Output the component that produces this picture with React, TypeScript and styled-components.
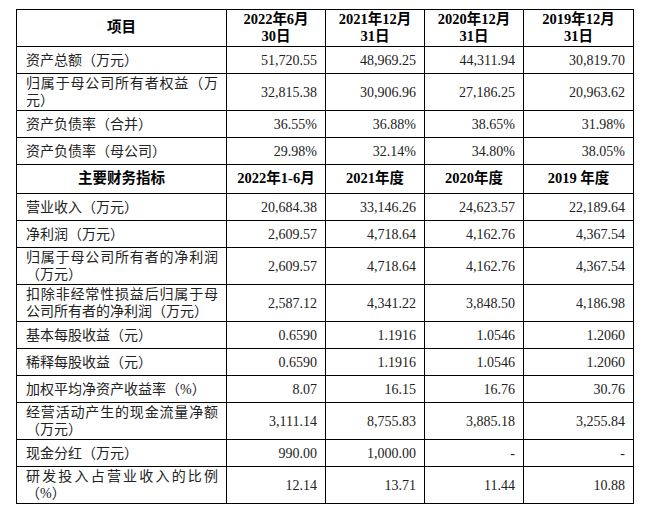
import styled, { createGlobalStyle } from "styled-components";

const GlobalStyle = createGlobalStyle`
  html, body {
    margin: 0;
    padding: 0;
    background: #ffffff;
  }
  body {
    font-family: "Liberation Serif", "Noto Sans CJK SC", serif;
    color: #111111;
  }
`;

type RowData = {
  label: string;
  values: string[];
  tall?: boolean;
};

const balanceRows: RowData[] = [
  { label: "资产总额（万元）", values: ["51,720.55", "48,969.25", "44,311.94", "30,819.70"] },
  { label: "归属于母公司所有者权益（万元）", values: ["32,815.38", "30,906.96", "27,186.25", "20,963.62"], tall: true },
  { label: "资产负债率（合并）", values: ["36.55%", "36.88%", "38.65%", "31.98%"] },
  { label: "资产负债率（母公司）", values: ["29.98%", "32.14%", "34.80%", "38.05%"] }
];

const indicatorRows: RowData[] = [
  { label: "营业收入（万元）", values: ["20,684.38", "33,146.26", "24,623.57", "22,189.64"] },
  { label: "净利润（万元）", values: ["2,609.57", "4,718.64", "4,162.76", "4,367.54"] },
  { label: "归属于母公司所有者的净利润（万元）", values: ["2,609.57", "4,718.64", "4,162.76", "4,367.54"], tall: true },
  { label: "扣除非经常性损益后归属于母公司所有者的净利润（万元）", values: ["2,587.12", "4,341.22", "3,848.50", "4,186.98"], tall: true },
  { label: "基本每股收益（元）", values: ["0.6590", "1.1916", "1.0546", "1.2060"] },
  { label: "稀释每股收益（元）", values: ["0.6590", "1.1916", "1.0546", "1.2060"] },
  { label: "加权平均净资产收益率（%）", values: ["8.07", "16.15", "16.76", "30.76"] },
  { label: "经营活动产生的现金流量净额（万元）", values: ["3,111.14", "8,755.83", "3,885.18", "3,255.84"], tall: true },
  { label: "现金分红（万元）", values: ["990.00", "1,000.00", "-", "-"] },
  { label: "研发投入占营业收入的比例（%）", values: ["12.14", "13.71", "11.44", "10.88"], tall: true }
];

const Page = styled.div`
  padding: 9px 0 0 16px;
`;

const Table = styled.table`
  border-collapse: collapse;
  table-layout: fixed;
  width: 617px;
  font-size: 14px;
  line-height: 17px;
`;

const Row = styled.tr<{ $height: number }>`
  height: ${(p) => p.$height}px;
`;

const HeadCell = styled.th`
  border: 1px solid #000000;
  padding: 0 6px;
  font-weight: bold;
  font-size: 14.5px;
  line-height: 17.5px;
  text-align: center;
  vertical-align: middle;
  color: #000000;
`;

const LabelCell = styled.td`
  border: 1px solid #000000;
  padding: 1px 8px 1px 9px;
  text-align: justify;
  text-align-last: left;
  vertical-align: middle;
  color: #222222;
`;

const NumCell = styled.td`
  border: 1px solid #000000;
  padding: 1px 8px 1px 4px;
  text-align: right;
  vertical-align: middle;
  color: #222222;
`;

const Line = styled.span`
  display: block;
`;

const DataRows = ({ rows }: { rows: RowData[] }) => (
  <>
    {rows.map((row) => (
      <Row key={row.label} $height={row.tall ? 37 : 27}>
        <LabelCell>{row.label}</LabelCell>
        {row.values.map((v, i) => (
          <NumCell key={i}>{v}</NumCell>
        ))}
      </Row>
    ))}
  </>
);

export default function App() {
  return (
    <Page>
      <GlobalStyle />
      <Table>
        <colgroup>
          <col style={{ width: 210 }} />
          <col style={{ width: 99 }} />
          <col style={{ width: 99 }} />
          <col style={{ width: 99 }} />
          <col style={{ width: 110 }} />
        </colgroup>
        <tbody>
          <Row $height={37}>
            <HeadCell>项目</HeadCell>
            <HeadCell>
              <Line>2022年6月</Line>
              <Line>30日</Line>
            </HeadCell>
            <HeadCell>
              <Line>2021年12月</Line>
              <Line>31日</Line>
            </HeadCell>
            <HeadCell>
              <Line>2020年12月</Line>
              <Line>31日</Line>
            </HeadCell>
            <HeadCell>
              <Line>2019年12月</Line>
              <Line>31日</Line>
            </HeadCell>
          </Row>
          <DataRows rows={balanceRows} />
          <Row $height={29}>
            <HeadCell>主要财务指标</HeadCell>
            <HeadCell>2022年1-6月</HeadCell>
            <HeadCell>2021年度</HeadCell>
            <HeadCell>2020年度</HeadCell>
            <HeadCell>2019 年度</HeadCell>
          </Row>
          <DataRows rows={indicatorRows} />
        </tbody>
      </Table>
    </Page>
  );
}
